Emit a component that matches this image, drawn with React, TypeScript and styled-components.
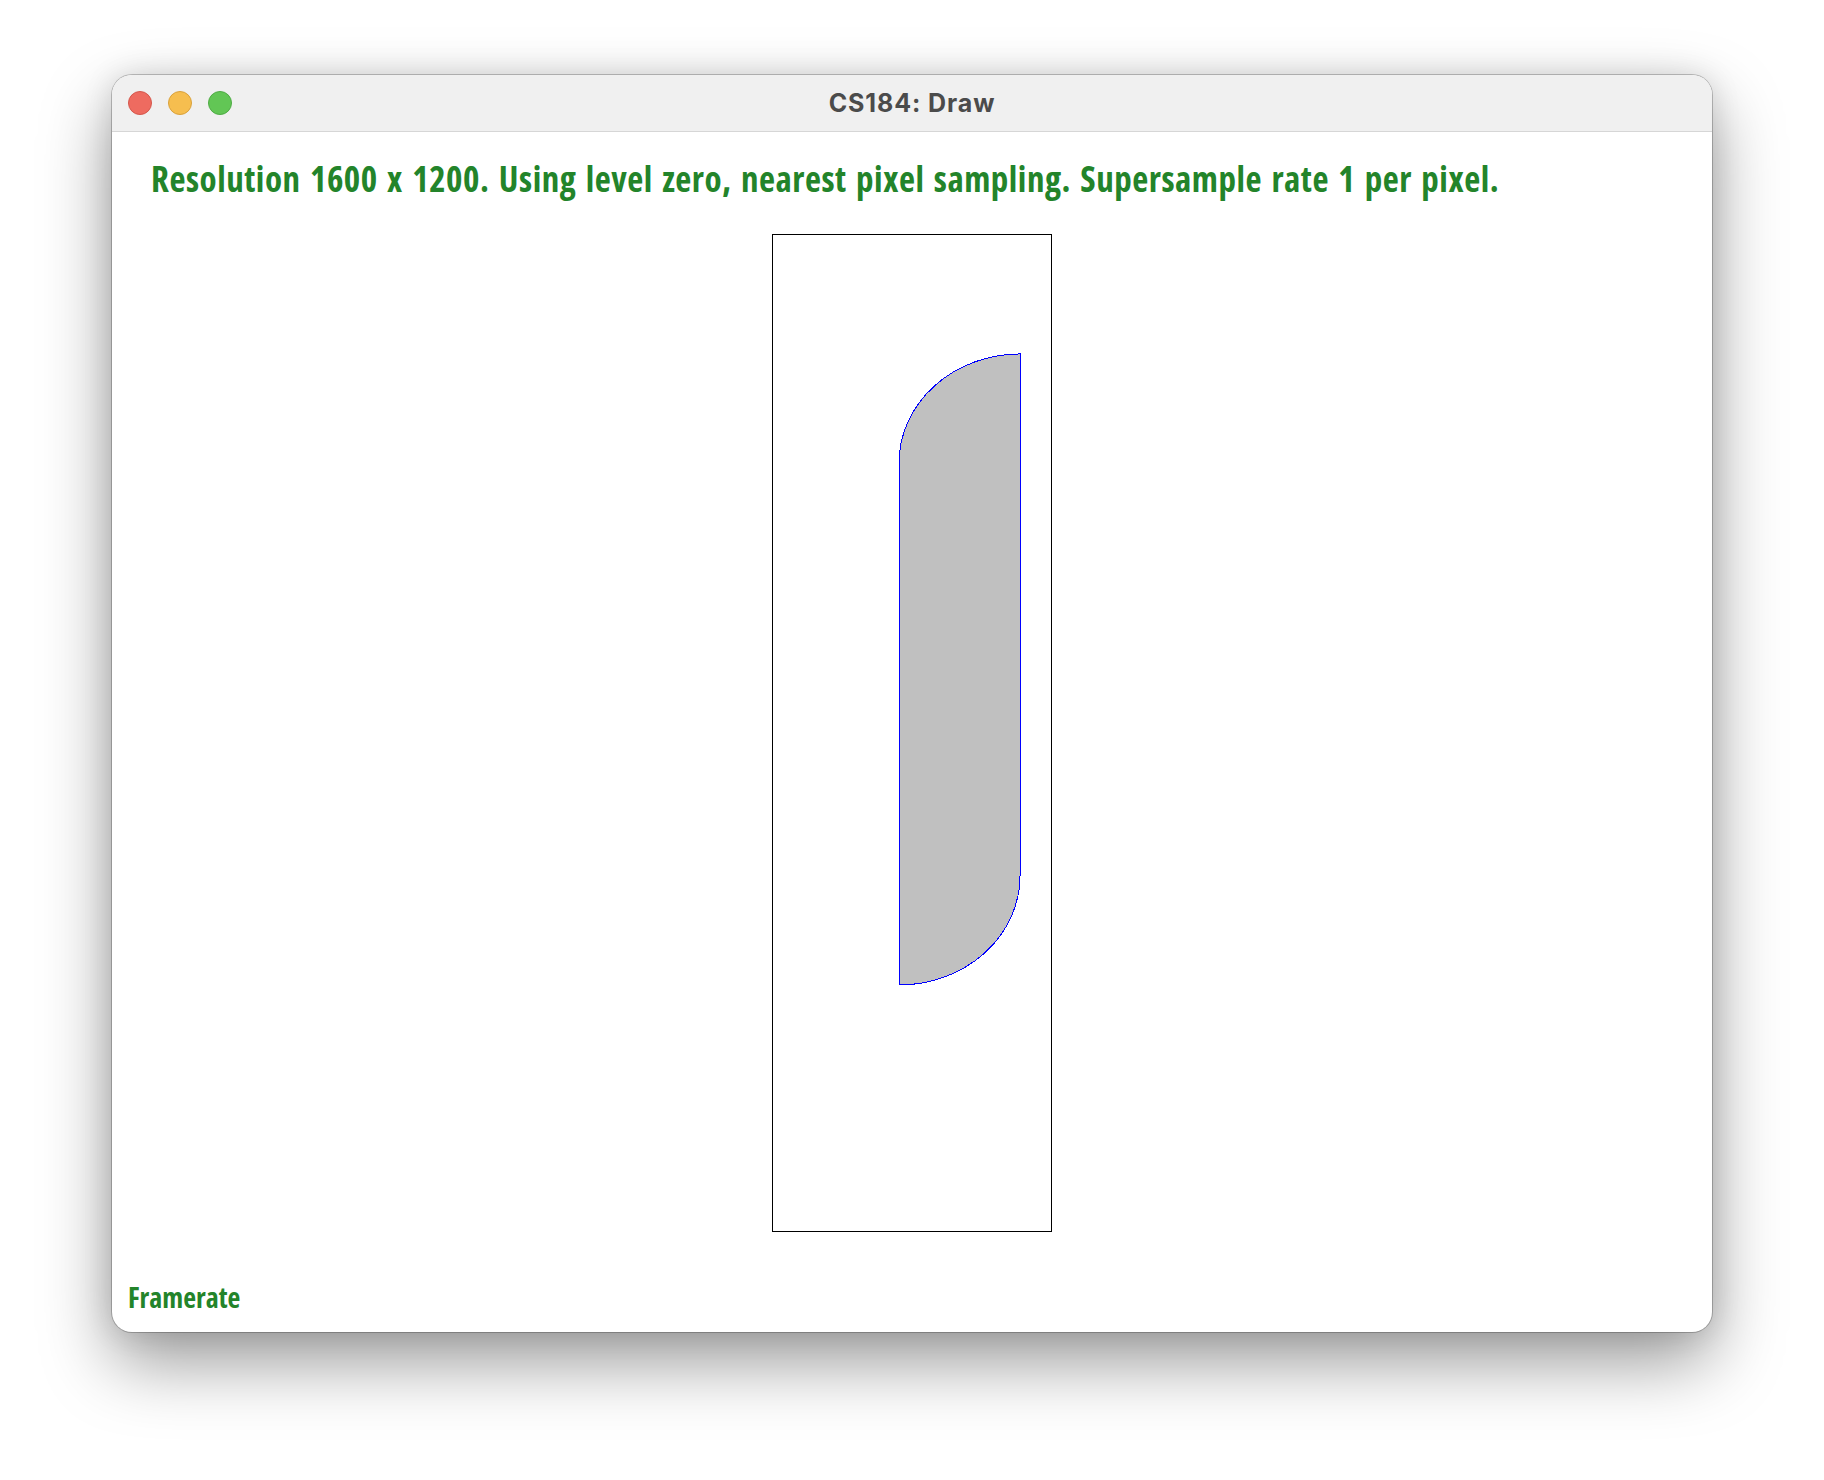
import React from "react";
import styled, { createGlobalStyle } from "styled-components";

const Global = createGlobalStyle`
  html, body { margin: 0; padding: 0; background: #ffffff; }
  body { width: 1824px; height: 1480px; overflow: hidden; }
`;

const Page = styled.div`
  width: 1824px;
  height: 1480px;
  box-sizing: border-box;
  padding: 75px 0 0 112px;
  background: #ffffff;
`;

const Window = styled.div`
  width: 1600px;
  display: flex;
  flex-direction: column;
  border-radius: 20px;
  overflow: hidden;
  background: #ffffff;
  box-shadow: 0 0 0 1px rgba(0, 0, 0, 0.22), 0 30px 70px rgba(0, 0, 0, 0.4),
    0 0 30px rgba(0, 0, 0, 0.12);
`;

const TitleBar = styled.div`
  height: 56px;
  display: grid;
  grid-template-columns: 1fr auto 1fr;
  align-items: center;
  background: #f0f0f0;
  border-bottom: 1px solid #d6d6d6;
`;

const Lights = styled.div`
  display: flex;
  gap: 16px;
  padding-left: 16px;
`;

const Light = styled.span<{ $fill: string; $ring: string }>`
  width: 24px;
  height: 24px;
  border-radius: 50%;
  box-sizing: border-box;
  background: ${(p) => p.$fill};
  border: 1px solid ${(p) => p.$ring};
`;

const Title = styled.div`
  font-family: Inter, "Liberation Sans", sans-serif;
  font-weight: 700;
  font-size: 25px;
  color: #4b4b4b;
  letter-spacing: 0.9px;
`;

const Content = styled.div`
  height: 1200px;
  box-sizing: border-box;
  display: flex;
  flex-direction: column;
  padding-top: 23px;
`;

const Label = styled.div<{ $size: number; $lh: number }>`
  font-family: "Open Sans", sans-serif;
  font-stretch: 75%;
  font-weight: 700;
  font-size: ${(p) => p.$size}px;
  line-height: ${(p) => p.$lh}px;
  color: #23842a;
  white-space: nowrap;
`;

const Status = styled(Label)`
  padding-left: 39px;
  letter-spacing: 0.52px;
  word-spacing: 2.6px;
`;

const Stage = styled.div`
  display: flex;
  justify-content: center;
  margin-top: 31px;
`;

const Canvas = styled.div`
  width: 278px;
  height: 996px;
  border: 1px solid #000000;
  background: #ffffff;
`;

const Footer = styled(Label)`
  margin-top: auto;
  padding: 0 0 16px 16px;
`;

export default function App() {
  return (
    <>
      <Global />
      <Page>
        <Window>
          <TitleBar>
            <Lights>
              <Light $fill="#ee6b60" $ring="#d4574c" />
              <Light $fill="#f6be4f" $ring="#d9a13c" />
              <Light $fill="#62c655" $ring="#4fab45" />
            </Lights>
            <Title>CS184: Draw</Title>
            <span />
          </TitleBar>
          <Content>
            <Status $size={35} $lh={48}>
              Resolution 1600 x 1200. Using level zero, nearest pixel sampling. Supersample rate 1 per pixel.
            </Status>
            <Stage>
              <Canvas>
                <svg width="278" height="996" viewBox="0 0 278 996" shapeRendering="crispEdges">
                  <path
                    d="M 247 119 L 247 641 A 121 109 0 0 1 126 750 L 126 228 A 121 109 0 0 1 247 119 Z"
                    fill="#c0c0c0"
                    stroke="#0000ff"
                    strokeWidth="1"
                  />
                </svg>
              </Canvas>
            </Stage>
            <Footer $size={28} $lh={38}>
              Framerate
            </Footer>
          </Content>
        </Window>
      </Page>
    </>
  );
}
